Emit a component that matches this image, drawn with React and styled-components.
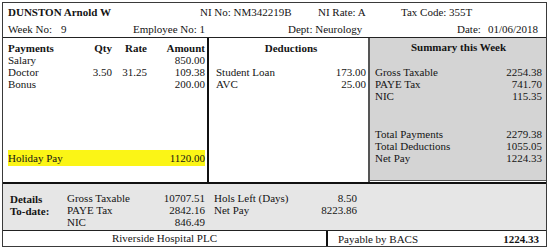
import React from "react";
import styled, { createGlobalStyle } from "styled-components";

const Global = createGlobalStyle`
  html, body { margin: 0; padding: 0; background: #fff; }
  body { font-family: "Liberation Serif", "DejaVu Serif", serif; font-size: 11px; color: #141414; }
  * { box-sizing: border-box; }
`;

const Page = styled.div`
  padding: 2px;
`;

const Sheet = styled.div`
  width: 545px;
  border: 1px solid #3a3a3a;
  display: flex;
  flex-direction: column;
  line-height: 12px;
  font-family: "Liberation Serif", "DejaVu Serif", serif;
`;

const Header = styled.div`
  border-bottom: 1px solid #222;
  padding: 0 8px 0 5px;
`;

const HeaderRow = styled.div`
  display: grid;
  grid-template-columns: ${(p) => p.$cols};
  align-items: center;
  height: ${(p) => p.$h}px;
`;

const Name = styled.span`
  font-weight: bold;
`;

const Gap = styled.span`
  display: inline-block;
  width: ${(p) => p.$w}px;
`;

const SplitCell = styled.span`
  display: flex;
  justify-content: space-between;
`;

const Main = styled.div`
  display: grid;
  grid-template-columns: 204px 2px 159px 2px 176px;
  height: 146px;
  border-bottom: 2px solid #111;
`;

const VLine = styled.div`
  background: ${(p) => p.$color};
`;

const Column = styled.div`
  display: flex;
  flex-direction: column;
  padding: ${(p) => p.$pad};
`;

const SummaryPanel = styled(Column)`
  background: #d4d4d4;
  border-bottom: 1px solid #555;
  margin-bottom: 1px;
`;

const Row = styled.div`
  display: grid;
  grid-template-columns: ${(p) => p.$cols || "1fr auto"};
  height: 12px;
  align-items: center;
  white-space: nowrap;
  margin-top: ${(p) => p.$mt || 0}px;
  font-weight: ${(p) => (p.$bold ? "bold" : "normal")};
`;

const Num = styled.span`
  text-align: right;
`;

const Heading = styled.div`
  font-weight: bold;
  height: 12px;
  text-align: ${(p) => p.$align || "left"};
`;

const Highlight = styled(Row)`
  margin-top: auto;
  background: #fbf516;
  height: 16px;
`;

const Details = styled.div`
  background: #e6e6e6;
  border-bottom: 1px solid #222;
  height: 47px;
  padding: 8px 0 0 7px;
  display: grid;
  grid-template-columns: 57px 80px 58px 9px 80px 63px;
  grid-auto-rows: 12px;
  align-items: center;
  white-space: nowrap;
`;

const DLabel = styled.span`
  font-weight: bold;
  transform: translateY(1px);
`;

const Footer = styled.div`
  display: grid;
  grid-template-columns: 323px 1fr;
  height: 15px;
`;

const FooterLeft = styled.div`
  text-align: center;
  line-height: 14px;
`;

const BacsBox = styled.div`
  border-left: 2px solid #111;
  display: flex;
  justify-content: space-between;
  align-items: center;
  padding: 0 7px 0 10px;
`;

const Bold = styled.span`
  font-weight: bold;
`;

export default function App() {
  return (
    <Page>
      <Global />
      <Sheet>
        <Header>
          <HeaderRow $cols="192px 118px 83px 1fr" $h={18}>
            <Name>DUNSTON Arnold W</Name>
            <span>NI No: NM342219B</span>
            <span>NI Rate: A</span>
            <span>Tax Code: 355T</span>
          </HeaderRow>
          <HeaderRow $cols="125px 155px 1fr" $h={16}>
            <span>
              Week No:<Gap $w={9} />9
            </span>
            <span>Employee No: 1</span>
            <SplitCell>
              <span>Dept: Neurology</span>
              <span>
                Date:<Gap $w={7} />01/06/2018
              </span>
            </SplitCell>
          </HeaderRow>
        </Header>

        <Main>
          <Column $pad="4px 2px 16px 5px">
            <Row $cols="74px 30px 35px 1fr" $bold>
              <span>Payments</span>
              <Num>Qty</Num>
              <Num>Rate</Num>
              <Num>Amount</Num>
            </Row>
            <Row $cols="74px 30px 35px 1fr">
              <span>Salary</span>
              <Num />
              <Num />
              <Num>850.00</Num>
            </Row>
            <Row $cols="74px 30px 35px 1fr">
              <span>Doctor</span>
              <Num>3.50</Num>
              <Num>31.25</Num>
              <Num>109.38</Num>
            </Row>
            <Row $cols="74px 30px 35px 1fr">
              <span>Bonus</span>
              <Num />
              <Num />
              <Num>200.00</Num>
            </Row>
            <Highlight>
              <span>Holiday Pay</span>
              <Num>1120.00</Num>
            </Highlight>
          </Column>
          <VLine $color="#111" />
          <Column $pad="4px 2px 0 7px">
            <Heading $align="center">Deductions</Heading>
            <Row $mt={12}>
              <span>Student Loan</span>
              <Num>173.00</Num>
            </Row>
            <Row>
              <span>AVC</span>
              <Num>25.00</Num>
            </Row>
          </Column>
          <VLine $color="#555" />
          <SummaryPanel $pad="3px 4px 0 5px">
            <Heading $align="center">Summary this Week</Heading>
            <Row $mt={13}>
              <span>Gross Taxable</span>
              <Num>2254.38</Num>
            </Row>
            <Row>
              <span>PAYE Tax</span>
              <Num>741.70</Num>
            </Row>
            <Row>
              <span>NIC</span>
              <Num>115.35</Num>
            </Row>
            <Row $mt={26}>
              <span>Total Payments</span>
              <Num>2279.38</Num>
            </Row>
            <Row>
              <span>Total Deductions</span>
              <Num>1055.05</Num>
            </Row>
            <Row>
              <span>Net Pay</span>
              <Num>1224.33</Num>
            </Row>
          </SummaryPanel>
        </Main>

        <Details>
          <DLabel>Details</DLabel>
          <span>Gross Taxable</span>
          <Num>10707.51</Num>
          <span />
          <span>Hols Left (Days)</span>
          <Num>8.50</Num>

          <DLabel>To-date:</DLabel>
          <span>PAYE Tax</span>
          <Num>2842.16</Num>
          <span />
          <span>Net Pay</span>
          <Num>8223.86</Num>

          <span />
          <span>NIC</span>
          <Num>846.49</Num>
        </Details>

        <Footer>
          <FooterLeft>Riverside Hospital PLC</FooterLeft>
          <BacsBox>
            <span>Payable by BACS</span>
            <Bold>1224.33</Bold>
          </BacsBox>
        </Footer>
      </Sheet>
    </Page>
  );
}
